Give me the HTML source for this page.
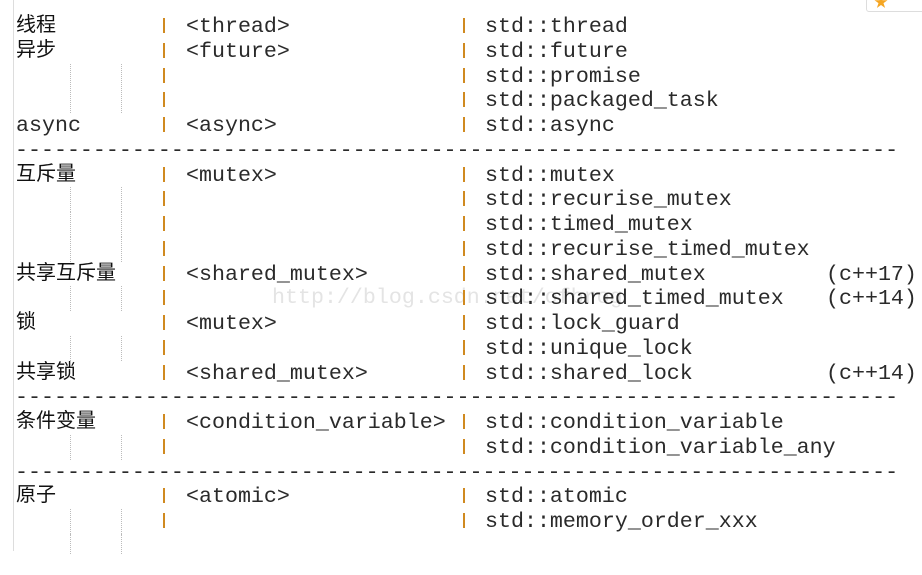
<!DOCTYPE html>
<html><head><meta charset="utf-8"><style>
body{margin:0;width:922px;height:575px;background:#fff;position:relative;overflow:hidden;font-family:"Liberation Mono","Noto Sans CJK SC",monospace;color:#2a2a2a}
.r{position:absolute;font-size:21.65px;white-space:pre;line-height:22px}
.c{position:absolute;font-size:20px;font-family:"Liberation Sans","Noto Sans CJK SC",sans-serif;line-height:22px;letter-spacing:0px;color:#111}
.p{position:absolute;width:2px;height:15px;background:#d08a20}
.d{position:absolute;left:121px;width:0;border-left:1px dotted #bbb}
.d2{position:absolute;left:70px;width:0;border-left:1px dotted #bbb}
</style></head><body>
<div style="position:absolute;left:13px;top:0;width:1px;height:551px;background:#ddd"></div>
<div style="position:absolute;left:866px;top:-2px;width:60px;height:12px;border:1px solid #ddd;border-radius:3px;background:#fff"></div>
<div style="position:absolute;left:874px;top:-8px;color:#f5a623;font-size:14px">★</div>
<div class="r" style="left:272px;top:287px;color:#e4e4e4">http://blog.csdn.net/ofbrog</div>
<div id="rows"></div>
<script>
var rows=[
["线程","<thread>","std::thread",""],
["异步","<future>","std::future",""],
["","","std::promise",""],
["","","std::packaged_task",""],
["async","<async>","std::async",""],
null,
["互斥量","<mutex>","std::mutex",""],
["","","std::recurise_mutex",""],
["","","std::timed_mutex",""],
["","","std::recurise_timed_mutex",""],
["共享互斥量","<shared_mutex>","std::shared_mutex","(c++17)"],
["","","std::shared_timed_mutex","(c++14)"],
["锁","<mutex>","std::lock_guard",""],
["","","std::unique_lock",""],
["共享锁","<shared_mutex>","std::shared_lock","(c++14)"],
null,
["条件变量","<condition_variable>","std::condition_variable",""],
["","","std::condition_variable_any",""],
null,
["原子","<atomic>","std::atomic",""],
["","","std::memory_order_xxx",""]];
var h="",dash="-".repeat(68);
rows.forEach(function(r,i){var y=26+i*24.75;var t=y-10;
if(!r){h+='<div class="r" style="left:15px;top:'+t+'px">'+dash+'</div>';return;}
if(r[0]){var cj=/[a-z]/.test(r[0]);h+='<div class="'+(cj?'r':'c')+'" style="left:16px;top:'+(t-(cj?0:2))+'px">'+r[0]+'</div>';}
else h+='<div class="d" style="top:'+(y-12)+'px;height:25px"></div><div class="d2" style="top:'+(y-12)+'px;height:25px"></div>';
h+='<div class="p" style="left:163px;top:'+(y-8)+'px"></div><div class="p" style="left:463px;top:'+(y-8)+'px"></div>';
if(r[1])h+='<div class="r" style="left:186px;top:'+t+'px">'+r[1].replace(/</g,"&lt;").replace(/>/g,"&gt;")+'</div>';
h+='<div class="r" style="left:485px;top:'+t+'px">'+r[2]+'</div>';
if(r[3])h+='<div class="r" style="left:826px;top:'+t+'px">'+r[3]+'</div>';
});
h+='<div class="d" style="top:'+(26+21*24.75-12)+'px;height:20px"></div><div class="d2" style="top:'+(26+21*24.75-12)+'px;height:20px"></div>';
document.getElementById("rows").innerHTML=h;
</script>
</body></html>
